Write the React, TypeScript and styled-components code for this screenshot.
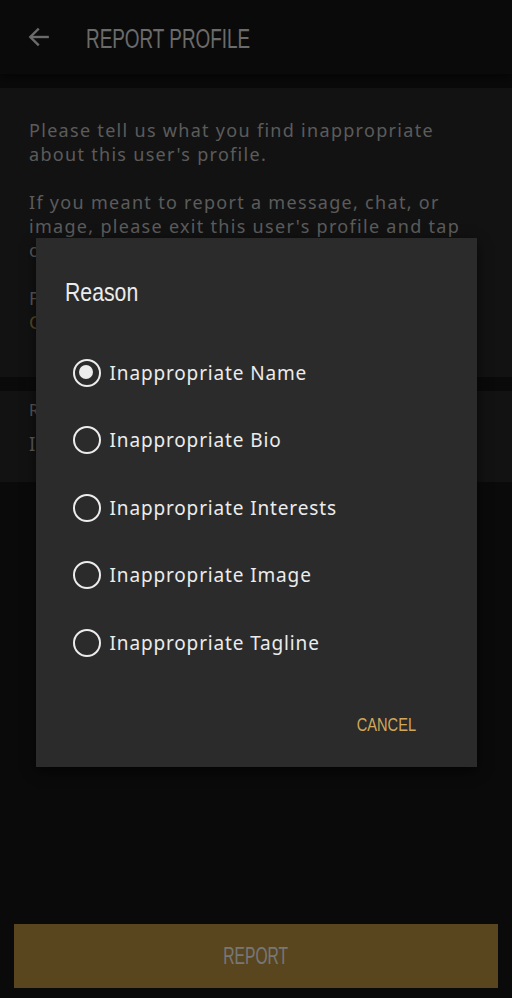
import React, { useState } from 'react';
import styled, { createGlobalStyle } from 'styled-components';

const GlobalStyle = createGlobalStyle`
  html, body {
    margin: 0;
    padding: 0;
    background: #141414;
  }
  body {
    font-family: "Noto Sans", "Liberation Sans", sans-serif;
  }
`;

// no condensed face is installed, so the narrow headings are squeezed
const Narrow = styled.span<{ $size: number; $scale: number; $origin?: string }>`
  display: inline-block;
  font-family: "Liberation Sans", Arial, sans-serif;
  font-size: ${(p) => p.$size}px;
  transform: scaleX(${(p) => p.$scale});
  transform-origin: ${(p) => p.$origin || 'left center'};
  white-space: nowrap;
`;

const Screen = styled.div`
  position: relative;
  width: 512px;
  height: 998px;
  display: flex;
  flex-direction: column;
  background: #141414;
  overflow: hidden;
`;

const TopBar = styled.div`
  height: 74px;
  display: flex;
  align-items: center;
  padding: 0 0 0 26px;
  gap: 34px;
  background: #141414;
  color: #d6d6d6;
  box-shadow: 0 4px 10px rgba(0, 0, 0, 0.5);
`;

const BarTitle = styled.div`
  padding-top: 5px;
`;

const Panel = styled.div<{ $top: number }>`
  margin-top: ${(p) => p.$top}px;
  background: #242424;
  padding: 30px 29px 43px;
`;

const FieldPanel = styled(Panel)`
  padding: 9px 29px 26px;
`;

const Paragraph = styled.p`
  margin: 0 0 24px;
  max-width: 434px;
  font-size: 18px;
  line-height: 24px;
  letter-spacing: 1.3px;
  color: #b6b6b6;
  &:last-child {
    margin-bottom: 0;
  }
`;

const Link = styled.span`
  color: #b89548;
`;

const FieldLabel = styled.div`
  font-size: 16px;
  line-height: 20px;
  color: #b6b6b6;
  margin-bottom: 12px;
`;

const FieldValue = styled.div`
  font-size: 19px;
  line-height: 24px;
  letter-spacing: 0.8px;
  color: #b6b6b6;
`;

const Spacer = styled.div`
  flex: 1;
`;

const ReportButton = styled.button`
  margin: 0 14px 10px;
  height: 64px;
  border: none;
  background: #b28a3c;
  color: #eeeeee;
  padding: 0;
  display: flex;
  align-items: center;
  justify-content: center;
`;

const Scrim = styled.div`
  position: absolute;
  inset: 0;
  background: rgba(0, 0, 0, 0.5);
  display: flex;
  justify-content: center;
  align-items: flex-start;
  padding-top: 238px;
`;

const Dialog = styled.div`
  width: 441px;
  height: 529px;
  box-sizing: border-box;
  background: #2b2b2b;
  box-shadow: 0 4px 12px rgba(0, 0, 0, 0.6);
  display: flex;
  flex-direction: column;
  padding: 40px 0 0;
`;

const DialogTitle = styled.div`
  color: #ececec;
  padding-left: 29px;
  margin-bottom: 32px;
`;

const OptionList = styled.div`
  display: flex;
  flex-direction: column;
  padding-left: 37px;
`;

const Option = styled.label`
  display: flex;
  align-items: center;
  height: 67.5px;
  gap: 9px;
  cursor: pointer;
`;

const Radio = styled.span<{ $on: boolean }>`
  position: relative;
  width: 28px;
  height: 28px;
  box-sizing: border-box;
  border: 2.5px solid #ececec;
  border-radius: 50%;
  flex-shrink: 0;
  &::after {
    content: '';
    position: absolute;
    left: 4.5px;
    top: 4.5px;
    width: 14px;
    height: 14px;
    border-radius: 50%;
    background: #ececec;
    display: ${(p) => (p.$on ? 'block' : 'none')};
  }
`;

const OptionText = styled.span`
  font-size: 19px;
  color: #ececec;
  letter-spacing: 0.85px;
`;

const Actions = styled.div`
  margin-top: auto;
  display: flex;
  justify-content: flex-end;
  padding: 0 60px 31px 0;
`;

const CancelButton = styled.button`
  background: none;
  border: none;
  padding: 0;
  color: #d2a85a;
`;

const BackArrow = () => (
  <svg width="26" height="26" viewBox="0 0 24 24" fill="none" stroke="#d6d6d6" strokeWidth="2.2" strokeLinecap="square">
    <path d="M20 12H5" />
    <path d="M11 5l-7 7 7 7" />
  </svg>
);

const reasons = [
  'Inappropriate Name',
  'Inappropriate Bio',
  'Inappropriate Interests',
  'Inappropriate Image',
  'Inappropriate Tagline',
];

const App: React.FC = () => {
  const [selected, setSelected] = useState(0);

  return (
    <Screen>
      <GlobalStyle />
      <TopBar>
        <BackArrow />
        <BarTitle>
          <Narrow $size={27} $scale={0.7}>REPORT PROFILE</Narrow>
        </BarTitle>
      </TopBar>
      <Panel $top={14}>
        <Paragraph>Please tell us what you find inappropriate about this user's profile.</Paragraph>
        <Paragraph>
          If you meant to report a message, chat, or image, please exit this user's profile and tap on the flag icon.
        </Paragraph>
        <Paragraph>
          For more information, see our
          <br />
          <Link>Community Guidelines</Link>
        </Paragraph>
      </Panel>
      <FieldPanel $top={14}>
        <FieldLabel>Reason</FieldLabel>
        <FieldValue>Inappropriate Name</FieldValue>
      </FieldPanel>
      <Spacer />
      <ReportButton>
        <Narrow $size={23} $scale={0.68} $origin="center">REPORT</Narrow>
      </ReportButton>

      <Scrim>
        <Dialog>
          <DialogTitle>
            <Narrow $size={25} $scale={0.85}>Reason</Narrow>
          </DialogTitle>
          <OptionList>
            {reasons.map((r, i) => (
              <Option key={r} onClick={() => setSelected(i)}>
                <Radio $on={selected === i} />
                <OptionText>{r}</OptionText>
              </Option>
            ))}
          </OptionList>
          <Actions>
            <CancelButton>
              <Narrow $size={19} $scale={0.77} $origin="right center">CANCEL</Narrow>
            </CancelButton>
          </Actions>
        </Dialog>
      </Scrim>
    </Screen>
  );
};

export default App;
